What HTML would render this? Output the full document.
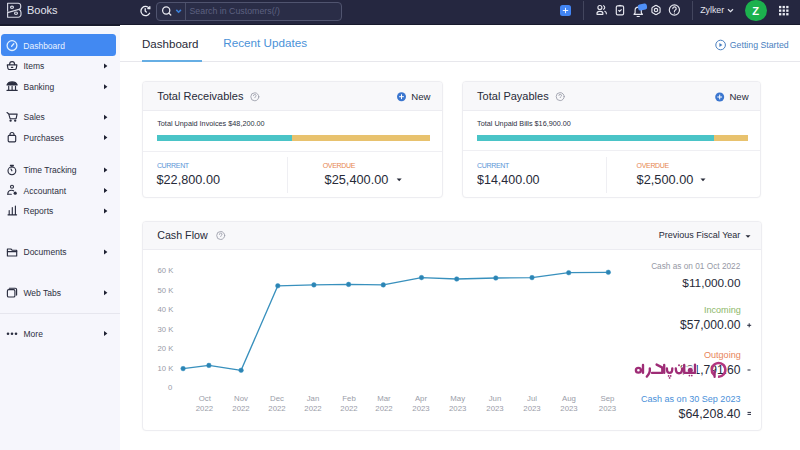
<!DOCTYPE html>
<html><head><meta charset="utf-8">
<style>
*{box-sizing:border-box;margin:0;padding:0}
html,body{width:800px;height:450px;overflow:hidden;background:#ffffff;font-family:"Liberation Sans",sans-serif}
.a{position:absolute}
svg{position:absolute;left:0;top:0;overflow:visible}
text{font-family:"Liberation Sans",sans-serif}
</style></head><body>
<!-- backgrounds -->
<div class="a" style="left:0;top:0;width:800px;height:26px;background:#252740;border-bottom:2px solid #181a2d"></div>
<div class="a" style="left:0;top:27px;width:120px;height:423px;background:#f6f6fc"></div>
<div class="a" style="left:120px;top:25px;width:680px;height:425px;background:#ffffff"></div>
<!-- search box -->
<div class="a" style="left:156px;top:2px;width:186px;height:19px;border:1px solid #50546f;border-radius:4px;background:#2a2d47"></div>
<div class="a" style="left:185px;top:3px;width:1px;height:17px;background:#4b4f68"></div>
<!-- plus button -->
<div class="a" style="left:560px;top:5px;width:11px;height:11px;border-radius:2.5px;background:#4285f4"></div>
<div class="a" style="left:583px;top:1px;width:1px;height:19px;background:#43465e"></div>
<div class="a" style="left:692px;top:1px;width:1px;height:19px;background:#43465e"></div>
<!-- notif badge -->

<!-- avatar -->
<div class="a" style="left:745px;top:-0.5px;width:21.5px;height:21.5px;border-radius:50%;background:#1cb24e"></div>
<!-- sidebar active -->
<div class="a" style="left:1px;top:34px;width:115px;height:22px;border-radius:3.5px;background:#4289f2"></div>
<div class="a" style="left:0;top:313px;width:120px;height:1px;background:#e6e6ee"></div>
<!-- tab line -->
<div class="a" style="left:120px;top:61px;width:680px;height:1px;background:#e7e7ec"></div>
<div class="a" style="left:142px;top:60px;width:60px;height:2px;background:#66aee4"></div>

<!-- cards -->
<div class="a" style="left:142px;top:81px;width:301px;height:116.5px;background:#fff;border:1px solid #ededf1;border-radius:4px;overflow:hidden;box-shadow:0 0 2px rgba(0,0,0,.035)">
  <div class="a" style="left:0;top:0;width:100%;height:29px;background:#f8f8fa;border-bottom:1px solid #ececf1"></div>
  <div class="a" style="left:-1px;top:69px;width:301px;height:1px;background:#efeff3"></div>
  <div class="a" style="left:144px;top:75px;width:1px;height:36px;background:#efeff3"></div>
</div>
<div class="a" style="left:462px;top:81px;width:299px;height:116.5px;background:#fff;border:1px solid #ededf1;border-radius:4px;overflow:hidden;box-shadow:0 0 2px rgba(0,0,0,.035)">
  <div class="a" style="left:0;top:0;width:100%;height:29px;background:#f8f8fa;border-bottom:1px solid #ececf1"></div>
  <div class="a" style="left:-1px;top:68px;width:301px;height:1px;background:#efeff3"></div>
  <div class="a" style="left:143px;top:75px;width:1px;height:36px;background:#efeff3"></div>
</div>
<div class="a" style="left:142px;top:220.5px;width:620px;height:210px;background:#fff;border:1px solid #ededf1;border-radius:4px;overflow:hidden;box-shadow:0 0 2px rgba(0,0,0,.035)">
  <div class="a" style="left:0;top:0;width:100%;height:28px;background:#f8f8fa;border-bottom:1px solid #ececf1"></div>
</div>
<!-- progress bars -->
<div class="a" style="left:157px;top:135px;width:135px;height:6px;background:#4ac4c7"></div>
<div class="a" style="left:292px;top:135px;width:138px;height:6px;background:#e8c26e"></div>
<div class="a" style="left:477px;top:135px;width:237px;height:6px;background:#4ac4c7"></div>
<div class="a" style="left:714px;top:135px;width:34px;height:6px;background:#e8c26e"></div>

<svg width="800" height="450" viewBox="0 0 800 450">
  <!-- ===== header ===== -->
  <g fill="none" stroke="#d6d8e4" stroke-width="1.15" stroke-linejoin="round">
    <path d="M7.6 11.5V3.2H18.2A2.5 2.5 0 0 1 20.7 5.7V7.2Q20.7 8.7 18.8 9.4L7.6 12.6"/>
    <path d="M18.8 9.4Q21 10.1 21 12.6V14.5A2.7 2.7 0 0 1 18.3 17.2H7.6V11.5"/>
    <ellipse cx="12" cy="7.2" rx="1.5" ry="1.1"/><ellipse cx="16" cy="13.2" rx="1.5" ry="1.2"/>
  </g>
  <text x="27" y="14.3" font-size="11" fill="#e2e4ee">Books</text>
  <!-- refresh -->
  <g fill="none" stroke="#eceef5" stroke-width="1.3" stroke-linecap="round">
    <path d="M149.3 8.4A4.6 4.6 0 1 0 149.6 13.2"/>
    <path d="M149.8 6.6v2h-2"/>
    <path d="M145.2 8.7v2.3l1.1 1"/>
  </g>
  <!-- search -->
  <g fill="none" stroke="#e8e9f0" stroke-width="1.25" stroke-linecap="round">
    <circle cx="166.2" cy="10.4" r="3.6"/><path d="M168.9 13.1l1.9 1.9"/>
  </g>
  <path d="M176.3 9.9l2.3 2.3 2.3-2.3" fill="none" stroke="#3a7fd8" stroke-width="1.6"/>
  <text x="189.5" y="14.2" font-size="8.8" fill="#5d6180">Search in Customers(/)</text>
  <!-- plus -->
  <path d="M565.5 7.8v5.4M562.8 10.5h5.4" stroke="#fff" stroke-width=".9"/>
  <!-- users -->
  <g fill="none" stroke="#e6e7ef" stroke-width="1.15" stroke-linecap="round" stroke-linejoin="round">
    <circle cx="599.9" cy="7.5" r="2"/>
    <path d="M597 14.3v-.7a2.3 2.3 0 0 1 2.3-2.3h1.3a2.3 2.3 0 0 1 2.3 2.3v.7z"/>
    <path d="M603.6 5.7a2 2 0 0 1 0 3.6"/><path d="M604.8 11.3a2.6 2.6 0 0 1 1.6 2.5"/>
  </g>
  <!-- clipboard -->
  <g fill="none" stroke="#e6e7ef" stroke-width="1.15" stroke-linejoin="round">
    <rect x="616.3" y="5.8" width="7.3" height="9" rx="1.3"/><path d="M618.6 5.5h2.7"/>
    <path d="M618.4 10.2l1.2 1.2 2-2.1"/>
  </g>
  <!-- bell -->
  <g fill="none" stroke="#e6e7ef" stroke-width="1.15" stroke-linejoin="round" stroke-linecap="round">
    <path d="M634 14.4h8.4l-1.1-1.6v-2.5a3.1 3.1 0 0 0-6.2 0v2.5z"/><path d="M637.1 16.5h2.2"/>
  </g>
  <g transform="rotate(-12 642.5 7)"><rect x="638" y="4" width="9" height="6" rx="2" fill="#4f8ff7"/></g>
  <!-- gear -->
  <g fill="none" stroke="#e6e7ef" stroke-width="1.15" stroke-linejoin="round">
    <path d="M655.00 5.82Q656.00 5.10 657.00 5.82Q658.00 6.54 659.12 7.04Q660.24 7.55 660.12 8.78Q660.00 10.00 660.12 11.22Q660.24 12.45 659.12 12.96Q658.00 13.46 657.00 14.18Q656.00 14.90 655.00 14.18Q654.00 13.46 652.88 12.96Q651.76 12.45 651.88 11.22Q652.00 10.00 651.88 8.77Q651.76 7.55 652.88 7.04Q654.00 6.54 655.00 5.82z"/><circle cx="656" cy="10" r="1.7"/>
  </g>
  <!-- help -->
  <g fill="none" stroke="#e6e7ef" stroke-width="1.15" stroke-linecap="round">
    <circle cx="674.4" cy="10" r="5.1"/><path d="M672.8 8.6a1.7 1.7 0 1 1 2.3 1.6c-.5.2-.7.5-.7 1.2"/>
  </g>
  <circle cx="674.4" cy="13.1" r=".6" fill="#e6e7ef"/>
  <text x="700.2" y="12.9" font-size="8.8" fill="#e2e4ee">Zylker</text>
  <path d="M728 9.3l2.5 2.4 2.5-2.4" fill="none" stroke="#e2e4ee" stroke-width="1.2"/>
  <text x="755.6" y="14.6" font-size="11.2" font-weight="bold" fill="#fff" text-anchor="middle">Z</text>
  <g fill="#eceef5">
    <rect x="779" y="5.9" width="2.3" height="2.3"/><rect x="782.6" y="5.9" width="2.3" height="2.3"/><rect x="786.2" y="5.9" width="2.3" height="2.3"/>
    <rect x="779" y="9.5" width="2.3" height="2.3"/><rect x="782.6" y="9.5" width="2.3" height="2.3"/><rect x="786.2" y="9.5" width="2.3" height="2.3"/>
    <rect x="779" y="13.1" width="2.3" height="2.3"/><rect x="782.6" y="13.1" width="2.3" height="2.3"/><rect x="786.2" y="13.1" width="2.3" height="2.3"/>
  </g>

  <!-- ===== sidebar ===== -->
  <g fill="none" stroke="#dff0ff" stroke-width="1.3" stroke-linecap="round">
    <circle cx="12" cy="45.6" r="4.9"/><path d="M11.6 46.2l2.2-2.4"/>
  </g>
  <text x="23.3" y="48.7" font-size="8.5" fill="#eaf2ff">Dashboard</text>
  <g font-size="8.5" fill="#2c2f3e">
    <text x="23.5" y="69.1">Items</text>
    <text x="23.5" y="89.8">Banking</text>
    <text x="23.5" y="120.3">Sales</text>
    <text x="23.5" y="140.6">Purchases</text>
    <text x="23.5" y="173">Time Tracking</text>
    <text x="23.5" y="193.5">Accountant</text>
    <text x="23.5" y="214">Reports</text>
    <text x="23.5" y="255">Documents</text>
    <text x="23.5" y="295.7">Web Tabs</text>
    <text x="23.5" y="336.5">More</text>
  </g>
  <g fill="#1f2233">
    <path d="M104 63.5v5l3.4-2.5z"/><path d="M104 84.3v5l3.4-2.5z"/>
    <path d="M104 114.8v5l3.4-2.5z"/><path d="M104 135.1v5l3.4-2.5z"/>
    <path d="M104 167.5v5l3.4-2.5z"/><path d="M104 188v5l3.4-2.5z"/><path d="M104 208.5v5l3.4-2.5z"/>
    <path d="M104 249.5v5l3.4-2.5z"/><path d="M104 290.2v5l3.4-2.5z"/><path d="M104 331v5l3.4-2.5z"/>
  </g>
  <g fill="none" stroke="#2b2e40" stroke-width="1.15" stroke-linejoin="round" stroke-linecap="round">
    <!-- items basket -->
    <path d="M7.3 64.9h9.6l-.6 3.4q-.3 1.2-1.5 1.2H9.4q-1.2 0-1.5-1.2z"/><path d="M9.6 64.6q0-2.9 2.5-2.9t2.5 2.9"/><path d="M11.4 67.3h1.4"/>
    <!-- banking -->
    <path d="M7 84.9q1.2-3 5.1-3t5.1 3z" fill="#2b2e40"/><path d="M8.7 86.3v3.4M12.1 86.3v3.4M15.5 86.3v3.4M7 90.4h10.2"/>
    <!-- cart -->
    <path d="M7 112.5l1.6 1.2 1.5 5h6l1-4.6H9"/><circle cx="10.6" cy="120.6" r=".6"/><circle cx="15.2" cy="120.6" r=".6"/>
    <!-- bag -->
    <rect x="8.2" y="135.3" width="7.5" height="6.5" rx="1"/><path d="M10 135.3v-.8a2 2 0 0 1 4 0v.8"/>
    <!-- stopwatch -->
    <circle cx="11.9" cy="170.8" r="3.9"/><path d="M10.4 165.4h3M11.9 165.5v1.4M11.9 170.8l-.9-1.8"/>
    <!-- accountant -->
    <circle cx="12" cy="186.7" r="1.5"/><path d="M7.8 194.2c0-2.5 1.6-4 3.8-4 .8 0 1.5.2 2 .6"/><path d="M7.8 194.2h3.5"/>
    <!-- reports -->
    <path d="M9.2 210.5v4M12.3 207.5v7M15.4 206v8.5M8 214.8h8.6"/>
    <!-- documents -->
    <path d="M7.4 249h3.5l1.2 1.2h4.6v5.8H7.4z"/><path d="M7.4 251.6h9.3"/>
    <!-- web tabs -->
    <rect x="7.4" y="289.6" width="7.5" height="7.4" rx="1.3"/><path d="M9.3 288.2h6a1.3 1.3 0 0 1 1.3 1.3v5.6"/>
  </g>
  <circle cx="15.2" cy="193.2" r="1.6" fill="#2b2e40"/>
  <g fill="#2b2e40"><circle cx="8" cy="333.8" r="1.3"/><circle cx="12" cy="333.8" r="1.3"/><circle cx="16" cy="333.8" r="1.3"/></g>

  <!-- ===== tabs ===== -->
  <text x="142" y="47.8" font-size="11.55" fill="#272a38">Dashboard</text>
  <text x="223.3" y="46.7" font-size="11.7" fill="#4a92d8">Recent Updates</text>
  <g fill="none" stroke="#4a7fc0" stroke-width="1"><circle cx="720.6" cy="45" r="4.8"/></g>
  <path d="M719.4 43v4l3-2z" fill="#4a7fc0"/>
  <text x="729.8" y="47.5" font-size="8.75" fill="#4a7fc0">Getting Started</text>

  <!-- ===== receivables ===== -->
  <text x="157.2" y="100.1" font-size="11" fill="#272a38">Total Receivables</text>
  <g fill="none" stroke="#9d9fac" stroke-width=".9" stroke-linecap="round">
    <circle cx="254.8" cy="96.8" r="4"/><path d="M253.5 95.7a1.3 1.3 0 1 1 1.8 1.2c-.3.1-.5.4-.5.8"/>
    <circle cx="560.2" cy="96.6" r="4"/><path d="M558.9 95.5a1.3 1.3 0 1 1 1.8 1.2c-.3.1-.5.4-.5.8"/>
    <circle cx="220.7" cy="235.5" r="4"/><path d="M219.4 234.4a1.3 1.3 0 1 1 1.8 1.2c-.3.1-.5.4-.5.8"/>
  </g>
  <g fill="#3b76cf">
    <circle cx="401.5" cy="96.7" r="4.5"/><circle cx="719.7" cy="97" r="4.5"/>
  </g>
  <path d="M401.5 94.3v4.8M399.1 96.7h4.8M719.7 94.6v4.8M717.3 97h4.8" stroke="#fff" stroke-width="1"/>
  <text x="411.3" y="100.2" font-size="9.6" fill="#272a38">New</text>
  <text x="729.4" y="100.4" font-size="9.6" fill="#272a38">New</text>
  <text x="157.2" y="125.8" font-size="7.28" fill="#2d3042">Total Unpaid Invoices $48,200.00</text>
  <text x="156.9" y="167.5" font-size="7" letter-spacing="-.33" fill="#5b95d6">CURRENT</text>
  <text x="156.5" y="184" font-size="12.7" fill="#272a38">$22,800.00</text>
  <text x="322.7" y="167.8" font-size="7" letter-spacing="-.33" fill="#e6864f">OVERDUE</text>
  <text x="324.6" y="184.4" font-size="12.75" fill="#272a38">$25,400.00</text>
  <path d="M396.7 178.6h5l-2.5 2.6z" fill="#272a38"/>

  <!-- ===== payables ===== -->
  <text x="477.1" y="99.5" font-size="11" fill="#272a38">Total Payables</text>
  <text x="477.1" y="125.8" font-size="7.24" fill="#2d3042">Total Unpaid Bills $16,900.00</text>
  <text x="477" y="167.5" font-size="7" letter-spacing="-.33" fill="#5b95d6">CURRENT</text>
  <text x="477" y="184" font-size="12.5" fill="#272a38">$14,400.00</text>
  <text x="636.6" y="167.5" font-size="7" letter-spacing="-.33" fill="#e6864f">OVERDUE</text>
  <text x="636.6" y="184" font-size="12.75" fill="#272a38">$2,500.00</text>
  <path d="M700.5 178.6h5l-2.5 2.6z" fill="#272a38"/>

  <!-- ===== cash flow ===== -->
  <text x="157.2" y="239.2" font-size="10.7" fill="#272a38">Cash Flow</text>
  <text x="658.8" y="238.3" font-size="9" fill="#272a38">Previous Fiscal Year</text>
  <path d="M745.5 235.3h5l-2.5 2.5z" fill="#272a38"/>

  <g font-size="7.7" fill="#979aa6" text-anchor="end">
    <text x="173.3" y="273.2">60 K</text><text x="173.3" y="292.7">50 K</text><text x="173.3" y="312.3">40 K</text>
    <text x="173.3" y="331.8">30 K</text><text x="173.3" y="351.3">20 K</text><text x="173.3" y="370.8">10 K</text><text x="172.3" y="390.2">0</text>
  </g>
  <g font-size="7.8" fill="#9a9da8" text-anchor="middle">
    <text x="204.8" y="401.4">Oct</text><text x="204.4" y="411">2022</text>
    <text x="241" y="401.4">Nov</text><text x="241" y="411">2022</text>
    <text x="277" y="401.4">Dec</text><text x="277" y="411">2022</text>
    <text x="313" y="401.4">Jan</text><text x="313" y="411">2022</text>
    <text x="349" y="401.4">Feb</text><text x="349" y="411">2022</text>
    <text x="384" y="401.4">Mar</text><text x="384" y="411">2022</text>
    <text x="421" y="401.4">Apr</text><text x="421" y="411">2023</text>
    <text x="457.7" y="401.4">May</text><text x="457.7" y="411">2023</text>
    <text x="495" y="401.4">Jun</text><text x="495" y="411">2023</text>
    <text x="532" y="401.4">Jul</text><text x="532" y="411">2023</text>
    <text x="569" y="401.4">Aug</text><text x="569" y="411">2023</text>
    <text x="607.5" y="401.4">Sep</text><text x="607.5" y="411">2023</text>
  </g>
  <polyline fill="none" stroke="#3890bd" stroke-width="1.35" stroke-linejoin="round"
    points="183.1,368.6 208.9,365.4 241.1,370.3 277.8,285.8 313.9,284.9 348.6,284.4 383.3,284.9 421.5,277.6 456.7,279 495.8,278 532,277.6 568.7,272.7 608.3,272.3"/>
  <g fill="#2c84b3" stroke="#3a95c4" stroke-width=".5">
    <circle cx="183.1" cy="368.6" r="2.3"/><circle cx="208.9" cy="365.4" r="2.3"/><circle cx="241.1" cy="370.3" r="2.3"/>
    <circle cx="277.8" cy="285.8" r="2.3"/><circle cx="313.9" cy="284.9" r="2.3"/><circle cx="348.6" cy="284.4" r="2.3"/>
    <circle cx="383.3" cy="284.9" r="2.3"/><circle cx="421.5" cy="277.6" r="2.3"/><circle cx="456.7" cy="279" r="2.3"/>
    <circle cx="495.8" cy="278" r="2.3"/><circle cx="532" cy="277.6" r="2.3"/><circle cx="568.7" cy="272.7" r="2.3"/>
    <circle cx="608.3" cy="272.3" r="2.3"/>
  </g>

  <g text-anchor="end">
    <text x="740.3" y="269.2" font-size="8.27" fill="#9699a5">Cash as on 01 Oct 2022</text>
    <text x="740.5" y="287" font-size="11.8" fill="#272a38">$11,000.00</text>
    <text x="740.8" y="313.4" font-size="9.1" fill="#8db76a">Incoming</text>
    <text x="740.5" y="329.2" font-size="12.1" fill="#272a38">$57,000.00</text>
    <text x="740.8" y="358" font-size="9.1" fill="#e8845a">Outgoing</text>
    <text x="740.5" y="374" font-size="12.1" fill="#272a38">$31,791.60</text>
    <text x="740.5" y="401.5" font-size="9.05" fill="#4a90d9">Cash as on 30 Sep 2023</text>
    <text x="740.5" y="417.6" font-size="12.4" fill="#272a38">$64,208.40</text>
  </g>
  <g stroke="#262a3e" stroke-width="1">
    <path d="M747.2 325.3h4M749.2 323.3v4"/>
    <path d="M747.5 370h3"/>
    <path d="M747.5 412.4h3.5M747.5 414.4h3.5"/>
  </g>
  <!-- watermark -->
  <g fill="none" stroke="#fff" stroke-opacity=".8" stroke-width="4" stroke-linecap="round" stroke-linejoin="round">
    <ellipse cx="638.4" cy="370.2" rx="2.5" ry="2.4"/>
    <path d="M643 365V372.8"/>
    <path d="M649.8 368.4Q650.4 373 646.8 376.6"/>
    <path d="M652 372.8H662.3V368"/><path d="M656.6 364.6L662 367.4"/>
    <path d="M664.2 365V372.8"/>
    <path d="M666.9 368.4Q666.9 372.9 669.6 372.9Q672.3 372.9 672.3 368.4"/>
    <path d="M675.8 368.4Q675.8 373.2 679 373.2Q682.2 373.2 682.2 368.4"/>
    <path d="M684.2 365V372.8H695V364.6"/>
    <circle cx="690.3" cy="370.3" r="2.8"/>
  </g>
  <g fill="none" stroke="#9e2c76" stroke-width="2.35" stroke-linecap="round" stroke-linejoin="round">
    <ellipse cx="638.4" cy="370.2" rx="2.5" ry="2.4"/>
    <path d="M643 365V372.8"/>
    <path d="M649.8 368.4Q650.4 373 646.8 376.6"/>
    <path d="M652 372.8H662.3V368"/><path d="M656.6 364.6L662 367.4"/>
    <path d="M664.2 365V372.8"/>
    <path d="M666.9 368.4Q666.9 372.9 669.6 372.9Q672.3 372.9 672.3 368.4"/>
    <path d="M675.8 368.4Q675.8 373.2 679 373.2Q682.2 373.2 682.2 368.4"/>
    <path d="M684.2 365V372.8H695V364.6"/>
  </g>
  <g fill="#9e2c76">
    <circle cx="668.6" cy="375.9" r=".85"/><circle cx="670.7" cy="375.9" r=".85"/><circle cx="669.6" cy="377.9" r=".85"/>
    <circle cx="679" cy="365.3" r=".95"/><circle cx="690.3" cy="370.3" r="2.5"/>
    <circle cx="689.4" cy="375.6" r=".85"/><circle cx="691.8" cy="375.6" r=".85"/>
  </g>
  <path d="M714.7 375.4A6.8 6.8 0 1 1 718 376.6" fill="none" stroke="#b3367f" stroke-width="2.5"/>
  <path d="M714.6 371.5v5.5" stroke="#9e2c76" stroke-width="2.2" stroke-linecap="round"/>
</svg>
</body></html>
